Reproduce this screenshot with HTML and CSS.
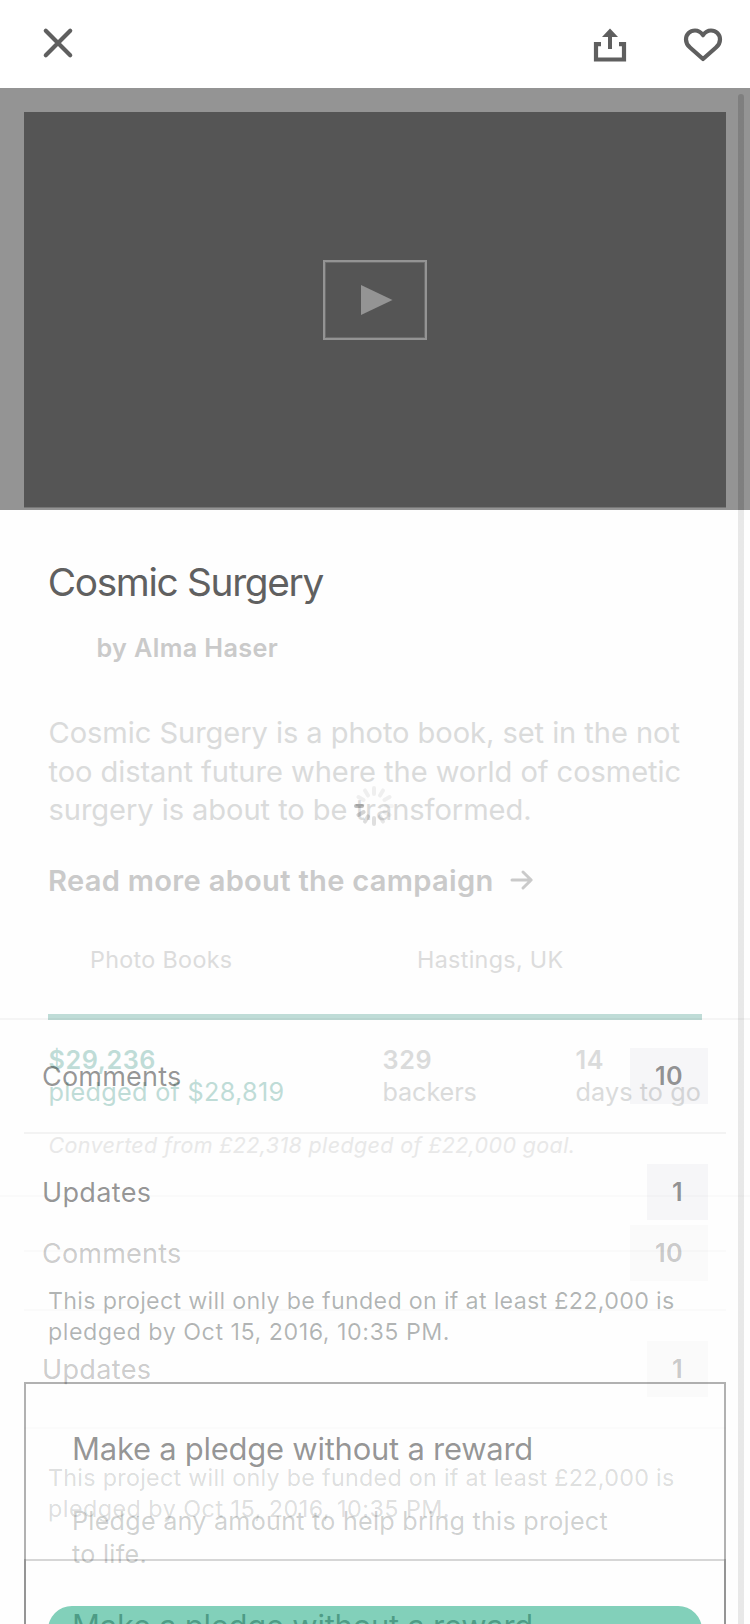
FILE: index.html
```html
<!DOCTYPE html>
<html lang="en">
<head>
<meta charset="utf-8">
<title>Cosmic Surgery</title>
<link rel="stylesheet" href="styles.css">
</head>
<body>
<main class="screen">
  <header class="topbar">
    <svg class="icon-close" viewBox="0 0 32 32"><path d="M3.8 3.8 28.2 28.2M28.2 3.8 3.8 28.2"/></svg>
    <svg class="icon-share" viewBox="0 0 32 34"><path class="stroke" d="M7 16.2H2V31.500H30V16.2H25"/><path class="fill" d="M16 .4 24 9H18V21H14V9H8Z"/></svg>
    <svg class="icon-heart" viewBox="0 0 38 34"><path d="M19 31 6 19.5C3.2 17 2 14.400 2 11.400 2 6.200 6 2.500 11 2.500 14.300 2.500 17 4.200 19 7.200 21 4.200 23.700 2.500 27 2.500 32 2.500 36 6.200 36 11.400 36 14.400 34.800 17 32 19.500Z"/></svg>
  </header>
  <section class="hero">
    <div class="video">
      <div class="play"><svg viewBox="0 0 32 30"><path d="M0 0 31.500 15 0 30Z"/></svg></div>
    </div>
  </section>
  <div class="stack">
    <section class="layer project">
      <h1 class="title">Cosmic Surgery</h1>
      <p class="author">by Alma Haser</p>
      <p class="blurb">Cosmic Surgery is a photo book, set in the not<br>too distant future where the world of cosmetic<br>surgery is about to be transformed.</p>
      <a class="more">Read more about the campaign<svg viewBox="0 0 24 20"><path d="M2 10H21M13 2 21.200 10 13 18"/></svg></a>
      <div class="meta"><span>Photo Books</span><span>Hastings, UK</span></div>
      <div class="progress"></div>
      <div class="stats">
        <div class="stat raised"><b>$29,236</b><span>pledged of $28,819</span></div>
        <div class="stat backers"><b>329</b><span>backers</span></div>
        <div class="stat days"><b>14</b><span>days to go</span></div>
      </div>
      <p class="converted">Converted from £22,318 pledged of £22,000 goal.</p>
      <div class="details faded">
        <div class="row comments"><span>Comments</span><b>10</b></div>
        <div class="row updates"><span>Updates</span><b>1</b></div>
        <p class="notice">This project will only be funded on if at least £22,000 is<br><span>pledged by Oct 15, 2016, 10:35 PM.</span></p>
        <div class="reward"><h2>Make a pledge without a reward</h2></div>
      </div>
    </section>
    <section class="layer incoming">
      <div class="details">
        <div class="row comments"><span>Comments</span><b>10</b></div>
        <div class="row updates"><span>Updates</span><b>1</b></div>
        <p class="notice">This project will only be funded on if at least £22,000 is<br><span>pledged by Oct 15, 2016, 10:35 PM.</span></p>
        <div class="reward">
          <h2>Make a pledge without a reward</h2>
          <p>Pledge any amount to help bring this project<br><span>to life.</span></p>
          <div class="button"></div>
        </div>
      </div>
    </section>
  </div>
  <svg class="spinner" viewBox="-20 -20 40 40">
    <g stroke="#000" stroke-width="4" stroke-linecap="round">
      <path d="M0-12V-18" opacity=".06"/>
      <path d="M0-12V-18" opacity=".06" transform="rotate(30)"/>
      <path d="M0-12V-18" opacity=".06" transform="rotate(60)"/>
      <path d="M0-12V-18" opacity=".04" transform="rotate(90)"/>
      <path d="M0-12V-18" opacity=".06" transform="rotate(120)"/>
      <path d="M0-12V-18" opacity=".09" transform="rotate(150)"/>
      <path d="M0-12V-18" opacity=".12" transform="rotate(180)"/>
      <path d="M0-12V-18" opacity=".13" transform="rotate(210)"/>
      <path d="M0-12V-18" opacity=".17" transform="rotate(240)"/>
      <path d="M0-12V-18" opacity=".25" transform="rotate(270)"/>
      <path d="M0-12V-18" opacity=".06" transform="rotate(300)"/>
      <path d="M0-12V-18" opacity=".06" transform="rotate(330)"/>
    </g>
  </svg>
  <div class="scrollbar"></div>
</main>
</body>
</html>
```
FILE: styles.css
```css
* { box-sizing: border-box; margin: 0; padding: 0; }
body { background: #fefefe; font-family: Inter, "Liberation Sans", sans-serif; }
svg { display: block; fill: none; overflow: visible; }

.screen { position: relative; width: 750px; height: 1624px; overflow: hidden; background: #fefefe; }

.topbar { display: flex; height: 88px; padding: 27px 28px 0 42px; align-items: flex-start; background: #fff; }
.topbar svg { stroke: #5f5f5f; stroke-width: 4.200px; flex: none; }
.icon-close { width: 32px; height: 32px; stroke-linecap: round; }
.icon-share { width: 32px; height: 34px; margin: 1px 58px 0 auto; }
.topbar .fill { fill: #5f5f5f; stroke: none; }
.icon-heart { width: 38px; height: 34px; margin-top: 1px; stroke-linejoin: round; }

.hero { height: 422px; padding: 24px 24px 0; background: #949494; }
.video { display: flex; justify-content: center; height: 396px; padding-top: 148px; background: #555; border-bottom: 1px solid #777; }
.play { width: 104px; height: 80px; border: 2px solid #949494; outline: 1px solid #6c6c6c; outline-offset: -3px; padding: 23px 0 0 36px; }
.play svg { width: 32px; height: 30px; fill: #949494; }

.stack { display: grid; height: 1114px; }
.layer { grid-area: 1 / 1; height: 1114px; min-width: 0; overflow: hidden; }

.project { padding-top: 48px; }
.title { height: 48px; padding-left: 47.700px; font-size: 38.800px; font-weight: 400; line-height: 48px; letter-spacing: -1.320px; color: #606060; }
.author { margin-top: 26px; padding-left: 96.500px; font-size: 25.200px; font-weight: 600; line-height: 32px; letter-spacing: .37px; color: #cacaca; }
.blurb { margin-top: 50.100px; padding-left: 48.500px; font-size: 29.100px; line-height: 38.600px; letter-spacing: -.07px; color: #dadbdb; white-space: nowrap; }
.more { display: flex; align-items: center; height: 36px; margin-top: 33.100px; padding-left: 48px; font-size: 29.100px; font-weight: 600; letter-spacing: .3px; color: #cacaca; }
.more svg { width: 24px; height: 20px; margin: -1px 0 0 16px; stroke: #cacaca; stroke-width: 3; stroke-linecap: round; stroke-linejoin: round; }
.meta { display: grid; grid-template-columns: 327px auto; margin-top: 47.500px; padding-left: 90px; font-size: 23.300px; line-height: 28px; letter-spacing: .33px; color: #dcdcdc; }
.progress { height: 6px; margin: 39.500px 48px 0; background: #bfdcd7; }
.stats { display: grid; grid-template-columns: 334px 193px auto; margin-top: 24px; padding-left: 48.500px; font-size: 25.200px; line-height: 32px; color: #dadbdb; white-space: nowrap; }
.stat { display: grid; }
.stat b { font-weight: 600; letter-spacing: .6px; }
.raised { color: #bfdcd7; letter-spacing: .3px; }
.days { letter-spacing: .1px; }
.backers { letter-spacing: -.1px; }
.converted { height: 26px; margin-top: 24px; padding-left: 48.500px; font-size: 21.500px; font-style: italic; line-height: 26px; letter-spacing: .36px; color: #e8e8e8; }

.incoming { padding-top: 508px; }
.faded { margin-top: 37.100px; }
.row { display: flex; align-items: center; justify-content: space-between; padding: 0 42px; font-size: 27.100px; color: rgba(0, 0, 0, .42); }
.row b { height: 56px; padding: 0 25px; font-size: 25.200px; font-weight: 600; line-height: 56px; letter-spacing: .4px; background: rgba(70, 70, 120, .045); }
.comments { height: 114px; border-top: 2px solid rgba(0, 0, 0, .035); letter-spacing: .15px; }
.updates { height: 118px; margin: 0 24px; padding: 0 18px; border-top: 2px solid rgba(0, 0, 0, .045); letter-spacing: .3px; }
.notice { height: 132px; margin: 0 24px; padding: 32.500px 0 0 24px; border-top: 2px solid rgba(0, 0, 0, .015); font-size: 23.300px; line-height: 31px; letter-spacing: .28px; color: rgba(10, 20, 18, .31); white-space: nowrap; }
.notice span { letter-spacing: .49px; }
.reward { height: 400px; margin: 0 24px; padding: 45.700px 0 0 46px; border: 2px solid rgba(0, 0, 0, .3); white-space: nowrap; }
.reward h2 { font-size: 31px; font-weight: 400; line-height: 38px; letter-spacing: -.26px; color: rgba(0, 0, 0, .42); }
.reward p { margin-top: 37.600px; font-size: 25.200px; line-height: 32.500px; letter-spacing: .235px; color: rgba(10, 20, 18, .2); }
.reward p span { letter-spacing: .25px; }
.button { height: 96px; margin: 35.700px 22px 0 -24px; border-radius: 24px; background: rgba(5, 162, 118, .5); }

.faded .row { color: rgba(0, 0, 0, .21); }
.faded .row b { background: rgba(0, 0, 0, .016); }
.faded .row.comments, .faded .row.updates { border-color: rgba(0, 0, 0, .015); }
.faded .notice { color: rgba(10, 20, 18, .15); border-color: rgba(0, 0, 0, .01); }
.faded .reward { border-color: rgba(0, 0, 0, .155); }

.spinner { position: absolute; left: 354px; top: 786px; width: 40px; height: 40px; }
.scrollbar { position: absolute; left: 738px; top: 94px; width: 6px; height: 1530px; border-radius: 3px 3px 0 0; background: linear-gradient(rgba(0, 0, 0, .14) 416px, rgba(0, 0, 0, .088) 416px); }
```
